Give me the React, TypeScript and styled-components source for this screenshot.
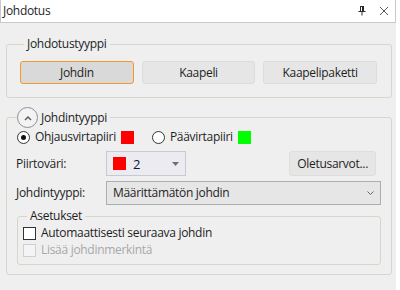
import styled, { createGlobalStyle } from "styled-components";

const GlobalStyle = createGlobalStyle`
  html, body {
    margin: 0;
    padding: 0;
    background: #ffffff;
  }
  body {
    font-family: "Open Sans", "Noto Sans", sans-serif;
    font-size: 12px;
    line-height: 16px;
    letter-spacing: -0.3px;
    color: #1e1e1e;
  }
`;

const Window = styled.div`
  width: 396px;
  height: 290px;
  box-sizing: border-box;
  background: #efefef;
  display: flex;
  flex-direction: column;
`;

const TitleBar = styled.div`
  height: 23px;
  box-sizing: border-box;
  background: #ffffff;
  border: 1px solid #c9c9c9;
  border-top: none;
  display: flex;
  align-items: center;
  padding: 0 6px 0 2px;
`;

const Title = styled.div`
  flex: 1;
  font-size: 12px;
`;

const TitleIcon = styled.svg`
  display: block;
  margin-left: 12px;
`;

const Body = styled.div`
  padding: 13px 4px 0 6px;
  display: flex;
  flex-direction: column;
  gap: 9px;
`;

const Group = styled.fieldset<{ $variant?: "outer" | "inner" | "sub" }>`
  margin: 0;
  min-width: 0;
  border: 1px solid #d6d6cb;
  border-radius: 3px;
  padding: ${({ $variant }) =>
    $variant === "inner"
      ? "0 0 9px 6px"
      : $variant === "sub"
      ? "0 0 6px 5px"
      : "0 14px 13px 13px"};
`;

const Legend = styled.legend`
  padding: 0 3px;
  margin-left: 4px;
  font-size: 12px;
  line-height: 16px;
  display: flex;
  align-items: center;
  gap: 3px;
`;

const ToggleRow = styled.div`
  display: grid;
  grid-template-columns: repeat(3, 1fr);
  gap: 8px;
  margin-top: 9px;
`;

const ToggleButton = styled.button<{ $active?: boolean }>`
  height: 23px;
  font: inherit;
  font-size: 12px;
  letter-spacing: -0.3px;
  color: #1e1e1e;
  border-radius: 3px;
  border: 1px solid ${({ $active }) => ($active ? "#f39a2a" : "#dcdcdc")};
  background: ${({ $active }) => ($active ? "#d9d9d9" : "#e6e6e6")};
  padding: 0;
`;

const CollapseButton = styled.span`
  width: 19px;
  height: 19px;
  border-radius: 50%;
  border: 1px solid #8f8f8f;
  background: #f3f3f3;
  display: flex;
  align-items: center;
  justify-content: center;
  margin-left: -3px;
`;

const RadioRow = styled.div`
  display: flex;
  align-items: center;
  height: 16px;
  margin: 1px 0 6px 4px;
`;

const RadioItem = styled.label`
  display: flex;
  align-items: center;
  gap: 5px;
  margin-right: 18px;
`;

const RadioCircle = styled.span<{ $checked?: boolean }>`
  width: 11px;
  height: 11px;
  border-radius: 50%;
  border: 1px solid #333333;
  background: #ffffff;
  display: flex;
  align-items: center;
  justify-content: center;
  &::after {
    content: "";
    width: 5px;
    height: 5px;
    border-radius: 50%;
    background: ${({ $checked }) => ($checked ? "#111111" : "transparent")};
  }
`;

const Swatch = styled.span<{ $color: string }>`
  display: inline-block;
  width: 13px;
  height: 13px;
  background: ${({ $color }) => $color};
`;

const FormGrid = styled.div`
  display: grid;
  grid-template-columns: 90px 1fr;
  row-gap: 5px;
  align-items: center;
  padding-left: 3px;
  margin-right: 10px;
`;

const Label = styled.div`
  font-size: 12px;
  line-height: 16px;
`;

const ColorRow = styled.div`
  display: flex;
  align-items: center;
  justify-content: space-between;
  padding-right: 5px;
`;

const ColorCombo = styled.div`
  width: 80px;
  height: 25px;
  box-sizing: border-box;
  border: 1px solid #c9c9d6;
  background: #ececf0;
  display: flex;
  align-items: center;
  padding: 0 6px;
  gap: 7px;
`;

const ComboValue = styled.span`
  flex: 1;
  font-size: 13px;
  color: #0a1840;
`;

const PlainButton = styled.button`
  height: 25px;
  padding: 0 7px;
  font: inherit;
  font-size: 12px;
  letter-spacing: -0.3px;
  color: #1e1e1e;
  border: 1px solid #dedede;
  border-radius: 3px;
  background: #e6e6e6;
`;

const Select = styled.div`
  height: 24px;
  box-sizing: border-box;
  border: 1px solid #adadad;
  background: #e6e6e6;
  display: flex;
  align-items: center;
  padding: 0 6px;
  font-size: 12px;
`;

const SelectText = styled.span`
  flex: 1;
`;

const SubGroupWrap = styled.div`
  margin: 3px 10px 0 4px;
`;

const CheckRow = styled.label<{ $disabled?: boolean }>`
  display: flex;
  align-items: center;
  gap: 5px;
  height: 16px;
  font-size: 12px;
  color: ${({ $disabled }) => ($disabled ? "#a8a8a8" : "#1e1e1e")};
  margin-top: 1px;
`;

const CheckBox = styled.span<{ $disabled?: boolean }>`
  width: 11px;
  height: 11px;
  border: 1px solid ${({ $disabled }) => ($disabled ? "#cfcfcf" : "#333333")};
  background: ${({ $disabled }) => ($disabled ? "#f4f4f4" : "#ffffff")};
`;

const App = () => {
  return (
    <>
      <GlobalStyle />
      <Window>
        <TitleBar>
          <Title>Johdotus</Title>
          <TitleIcon width="10" height="12" viewBox="0 0 10 12">
            <path d="M3 1.5h4M3.5 1.5v5M6.5 1.5v5M1.5 6.5h7M5 6.5v4" stroke="#2a2a2a" strokeWidth="1" fill="none" />
            <path d="M5.5 1.5v5" stroke="#2a2a2a" strokeWidth="1" />
          </TitleIcon>
          <TitleIcon width="10" height="10" viewBox="0 0 10 10">
            <path d="M1 1l8 8M9 1L1 9" stroke="#5a5a5a" strokeWidth="1" />
          </TitleIcon>
        </TitleBar>
        <Body>
          <Group $variant="outer">
            <Legend>Johdotustyyppi</Legend>
            <ToggleRow>
              <ToggleButton $active>Johdin</ToggleButton>
              <ToggleButton>Kaapeli</ToggleButton>
              <ToggleButton>Kaapelipaketti</ToggleButton>
            </ToggleRow>
          </Group>
          <Group $variant="inner">
            <Legend>
              <CollapseButton>
                <svg width="8" height="6" viewBox="0 0 8 6">
                  <path d="M1 5l3-3 3 3" stroke="#555" strokeWidth="1.4" fill="none" />
                </svg>
              </CollapseButton>
              Johdintyyppi
            </Legend>
            <RadioRow>
              <RadioItem>
                <RadioCircle $checked />
                <Label>Ohjausvirtapiiri</Label>
                <Swatch $color="#ff0000" />
              </RadioItem>
              <RadioItem>
                <RadioCircle />
                <Label>Päävirtapiiri</Label>
                <Swatch $color="#00ff00" />
              </RadioItem>
            </RadioRow>
            <FormGrid>
              <Label>Piirtoväri:</Label>
              <ColorRow>
                <ColorCombo>
                  <Swatch $color="#ff0000" />
                  <ComboValue>2</ComboValue>
                  <svg width="7" height="4" viewBox="0 0 7 4">
                    <path d="M0 0h7L3.5 4z" fill="#707070" />
                  </svg>
                </ColorCombo>
                <PlainButton>Oletusarvot...</PlainButton>
              </ColorRow>
              <Label>Johdintyyppi:</Label>
              <Select>
                <SelectText>Määrittämätön johdin</SelectText>
                <svg width="7" height="4" viewBox="0 0 7 4">
                  <path d="M0.5 0.5l3 3 3-3" stroke="#666" strokeWidth="1" fill="none" />
                </svg>
              </Select>
            </FormGrid>
            <SubGroupWrap>
              <Group $variant="sub">
                <Legend>Asetukset</Legend>
                <CheckRow>
                  <CheckBox />
                  Automaattisesti seuraava johdin
                </CheckRow>
                <CheckRow $disabled>
                  <CheckBox $disabled />
                  Lisää johdinmerkintä
                </CheckRow>
              </Group>
            </SubGroupWrap>
          </Group>
        </Body>
      </Window>
    </>
  );
};

export default App;
